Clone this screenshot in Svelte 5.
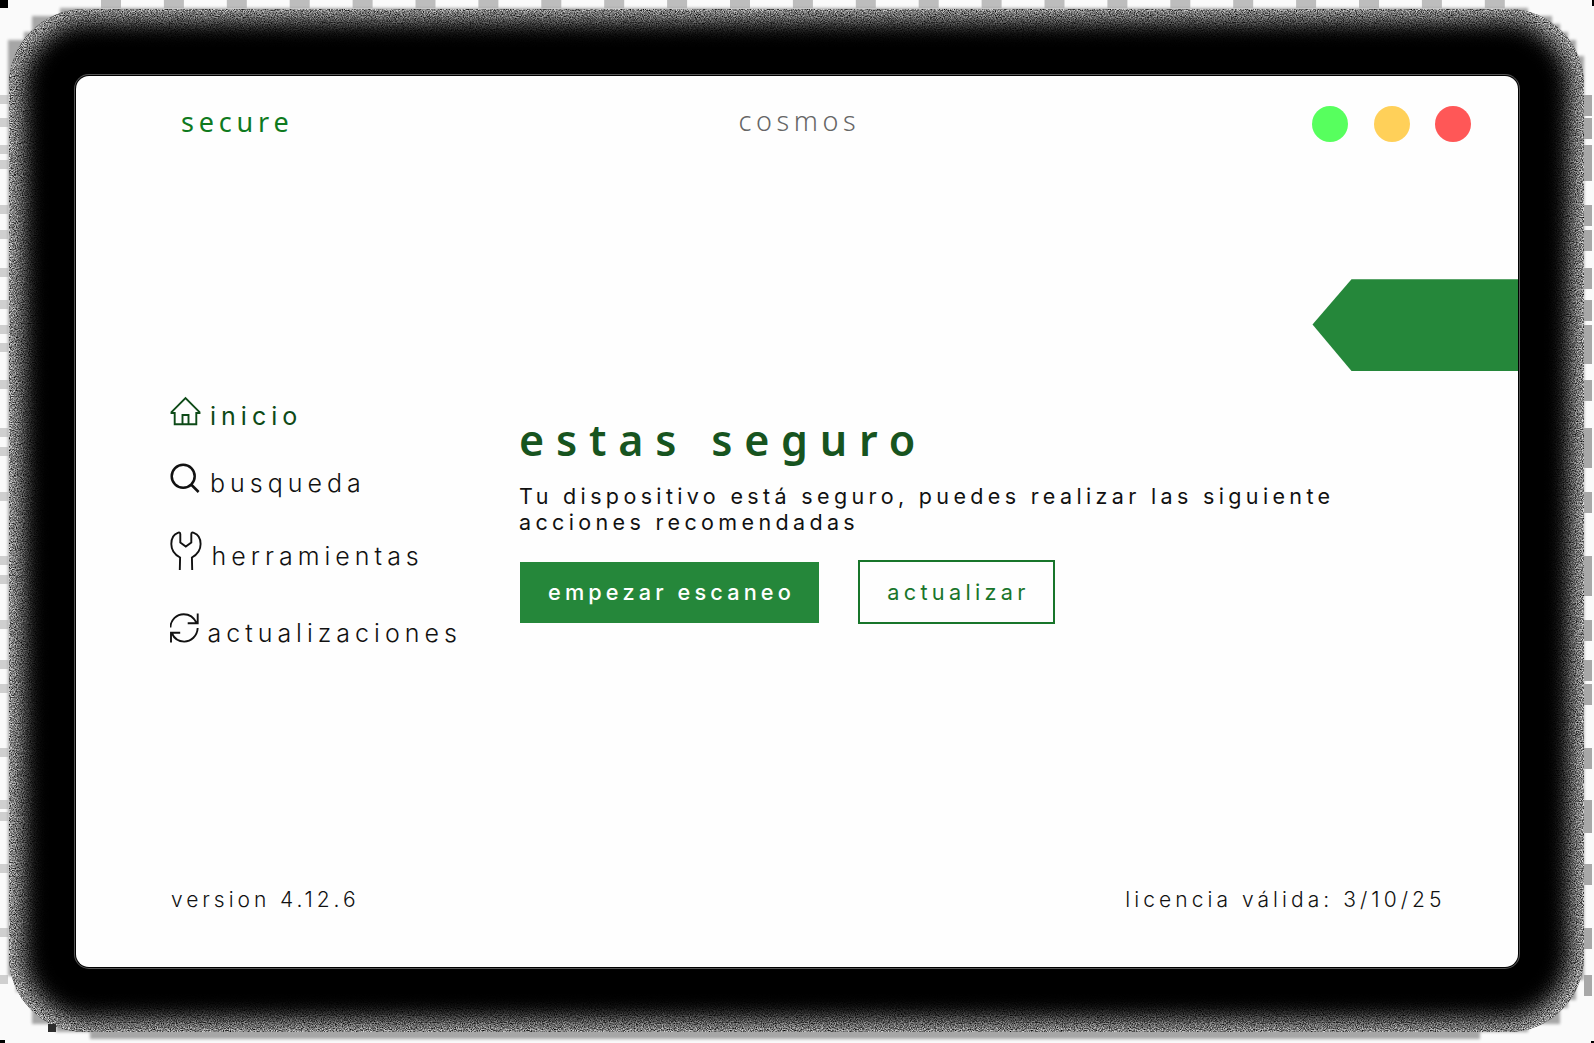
<script>
  const nav = [
    { id: 'home', label: 'inicio' },
    { id: 'search', label: 'busqueda' },
    { id: 'tools', label: 'herramientas' },
    { id: 'updates', label: 'actualizaciones' }
  ];
  const dots = ['green', 'amber', 'red'];
  const ticks = Array.from({ length: 23 }, (_, i) => 101 + i * 62.9);
  const bands = [95, 118, 145, 160, 205, 230, 268, 300, 325, 343, 380, 428, 447, 492, 556, 575, 620, 660, 684, 748, 800, 812, 864, 928, 975];
</script>

<div class="stage">
  <svg class="halo" width="1594" height="1043" viewBox="0 0 1594 1043" aria-hidden="true">
    <defs>
      <filter id="soft" x="-10%" y="-10%" width="120%" height="120%"><feGaussianBlur stdDeviation="11" /></filter>
      <filter id="smudge"><feGaussianBlur stdDeviation="1.5" /></filter>
      <filter id="grain" x="0" y="0" width="100%" height="100%" color-interpolation-filters="sRGB">
        <feTurbulence type="fractalNoise" baseFrequency="0.85" numOctaves="2" seed="7" />
        <feColorMatrix values="1.8 0 0 0 -0.28  1.8 0 0 0 -0.28  1.8 0 0 0 -0.28  0 0 0 0 1" />
      </filter>
      <mask id="edge">
        <rect x="9" y="9" width="1575" height="1023" rx="76" fill="#fff" />
        <rect x="22" y="20" width="1549" height="1001" rx="68" fill="#000" filter="url(#soft)" />
      </mask>
    </defs>
    <rect width="1594" height="1043" fill="#fafafa" />
    {#each ticks as x}
      <rect {x} y="0" width="20" height="8" fill="#bdbdbd" />
    {/each}
    {#each bands as y}
      <rect x="0" {y} width="8" height="9" fill="#cfcfcf" />
      <rect x="1584" {y} width="8" height="21" fill="#a8a8a8" />
    {/each}
    <path d="M120 8H1528V16H1552V24H1560V32H1568V40H1576V56H1584V980H1576V1000H1568V1008H1560V1024H1528V1032H1480V1039H90V1032H56V1024H32V1000H24V992H16V976H8V40H24V32H32V16H60V8Z" fill="#a6a6a6" filter="url(#smudge)" />
    <rect x="9" y="9" width="1575" height="1023" rx="76" fill="#000" />
    <rect x="8" y="8" width="1577" height="1025" filter="url(#grain)" mask="url(#edge)" />
    <path d="M0 0h8v8h-8zM1592 0h2v6h-2zM0 1040h5v3h-5zM1591 1041h3v2h-3z" fill="#000" />
    <rect x="48" y="1024" width="8" height="8" fill="#2e2e2e" />
  </svg>

  <main class="window">
    <header>
      <span class="brand">secure</span>
      <span class="title">cosmos</span>
      <div class="dots">
        {#each dots as d}<i class="dot {d}"></i>{/each}
      </div>
    </header>

    <svg class="tag" width="206" height="92" viewBox="0 0 206 92" aria-hidden="true">
      <path d="M0.500 45.500 39.500 0.300H206V92H39.500Z" fill="#25873a" />
    </svg>

    <div class="body">
      <nav>
        {#each nav as n}
          <a class="item {n.id}">
            {#if n.id === 'home'}
              <svg width="34" height="34" viewBox="0 0 34 34"><path d="M1.500 16.200 15.500 2 29.500 16.200V17H26.300V28.200H4.700V17H1.500ZM12.500 28V19H18.500V28" /></svg>
            {:else if n.id === 'search'}
              <svg width="34" height="34" viewBox="0 0 34 34" class="bold"><circle cx="13.200" cy="13.300" r="11.500" /><path d="M21.100 21.500 28.600 29" /></svg>
            {:else if n.id === 'tools'}
              <svg width="34" height="44" viewBox="0.700 0 34 44"><path d="M10.500 40 10.800 27.500C5 24.500 2 19.500 2 14C2 8.500 4.500 4.200 8.500 2.800Q10.800 2 11 4V12.500L16.500 16.500 22 12.500V4Q22.200 2 24.500 2.800C28.500 4.200 31.300 8.500 31.300 14C31.300 19.500 28 24.500 22.600 27.500L22.900 40" /></svg>
            {:else}
              <svg width="34" height="34" viewBox="0.800 0 34 34"><path d="M1.200 15.500C1.500 7.500 7.500 2.200 14.500 2.200C19.500 2.200 24.500 5 27.500 11M28.500 1.500V11.300H18.500M28.500 16C28 24 22 29.600 15 29.600C9.500 29.600 5 26.500 2.500 21M1.800 30.500V20.800H11" /></svg>
            {/if}
            <span>{n.label}</span>
          </a>
        {/each}
      </nav>

      <section>
        <h1>estas seguro</h1>
        <p>Tu dispositivo está seguro, puedes realizar las siguiente acciones recomendadas</p>
        <div class="actions">
          <button class="primary">empezar escaneo</button>
          <button class="secondary">actualizar</button>
        </div>
      </section>
    </div>

    <footer>
      <span class="version">version 4.12.6</span>
      <span>licencia válida: 3/10/25</span>
    </footer>
  </main>
</div>

<style>
  :global(body) { margin: 0; overflow: hidden; }
  .stage {
    position: relative;
    box-sizing: border-box;
    width: 1594px;
    height: 1043px;
    padding: 76px;
    font-family: Inter, 'Liberation Sans', sans-serif;
    color: #111;
  }
  .halo { position: absolute; inset: 0; }
  .window {
    position: relative;
    box-sizing: border-box;
    display: flex;
    flex-direction: column;
    width: 1442px;
    height: 891px;
    border-radius: 13px;
    background: #fefefe;
    box-shadow: 0 0 0 1px #000, 0 0 0 2px #555;
    overflow: hidden;
  }
  header {
    display: grid;
    grid-template-columns: 1fr auto 1fr;
    align-items: start;
    height: 203px;
    padding: 0 47px 0 105px;
    box-sizing: border-box;
    flex: none;
    font-family: 'Noto Sans', 'Open Sans', sans-serif;
    font-size: 27px;
    line-height: 36px;
  }
  .brand { margin-top: 28px; letter-spacing: 4.800px; color: #0f7a1e; }
  .title { margin-top: 27px; margin-right: 53px; letter-spacing: 4.600px; font-weight: 300; color: #666; }
  .dots { display: flex; justify-content: flex-end; gap: 25.500px; margin-top: 30px; }
  .dot { width: 36px; height: 36px; border-radius: 50%; }
  .green { background: #57ff5e; }
  .amber { background: #ffd059; }
  .red { background: #ff5757; }
  .tag { align-self: flex-end; flex: none; }
  .body { display: flex; flex: 1; }
  nav {
    display: grid;
    grid-template-rows: 67px 67px 82px 46px;
    align-content: start;
    width: 349px;
    margin-left: 94px;
    padding-top: 25px;
  }
  .item { display: flex; align-items: flex-start; font-size: 25px; font-weight: 300; line-height: 30px; letter-spacing: 5px; }
  .item svg { flex: none; fill: none; stroke: currentColor; stroke-width: 1.900; }
  .item svg.bold { stroke-width: 2.500; }
  .item span { margin-top: 5px; margin-left: 6px; }
  .home { color: #0d4a17; font-weight: 400; letter-spacing: 5px; }
  .tools span { margin-top: 11px; margin-left: 7.500px; }
  .updates span { margin-top: 6px; margin-left: 3.500px; }
  section { padding-top: 41px; width: 860px; }
  h1 {
    margin: 0 0 15px;
    font: 600 43px/56px 'Noto Sans', 'Open Sans', sans-serif;
    letter-spacing: 11.800px;
    color: #17541f;
  }
  p { margin: 0; font-size: 21.500px; line-height: 26px; letter-spacing: 4.350px; }
  .actions { display: flex; align-items: center; gap: 39px; margin-top: 25px; }
  button {
    box-sizing: border-box;
    margin: 0;
    padding: 0 0 0 4px;
    font: 450 21.700px/26px Inter, 'Liberation Sans', sans-serif;
    letter-spacing: 4.150px;
    text-align: center;
    white-space: nowrap;
  }
  .primary { width: 299px; height: 61px; margin-left: 1px; border: 0; background: #25873a; color: #fff; }
  .secondary { width: 197px; height: 64px; border: 2px solid #18752a; background: transparent; color: #18752a; font-weight: 400; letter-spacing: 4.300px; }
  footer {
    display: flex;
    justify-content: space-between;
    padding: 0 72.500px 54px 95px;
    font-size: 21px;
    font-weight: 300;
    line-height: 26px;
    letter-spacing: 4.050px;
  }
  .version { letter-spacing: 3.950px; }
</style>
